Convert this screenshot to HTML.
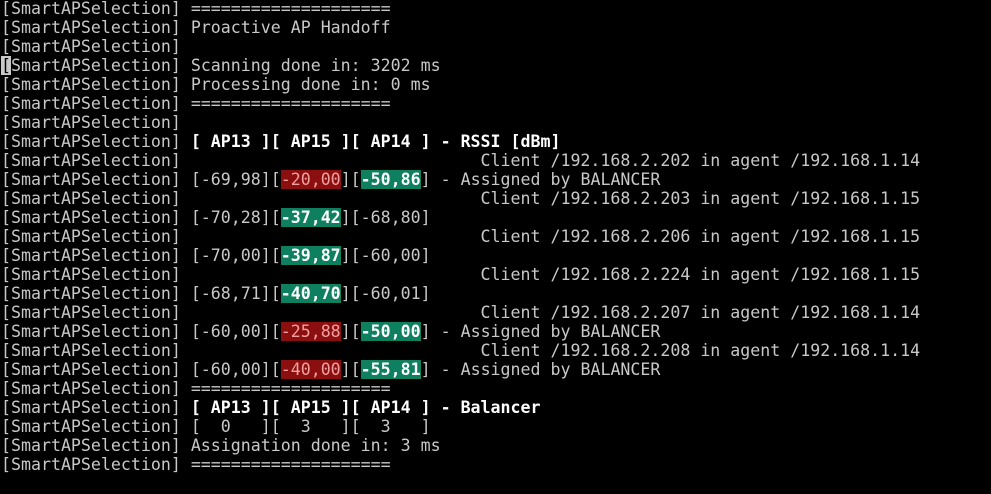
<!DOCTYPE html>
<html><head><meta charset="utf-8"><style>
html,body{margin:0;padding:0;background:#000;width:991px;height:494px;overflow:hidden}
pre{margin:0;padding:0 0 0 1px;position:relative;top:-1px;font-family:"DejaVu Sans Mono",monospace;font-size:16.6px;line-height:19px;color:#c8c8c8;white-space:pre}
b{color:#fff;font-weight:bold}
.r{background:#8c0f0f;color:#f0a0a0}
.g{background:#0e8060;color:#fff;font-weight:bold}
.c{background:#c8c8c8;color:#000}
</style></head><body><pre>[SmartAPSelection] ====================
[SmartAPSelection] Proactive AP Handoff
[SmartAPSelection]
<span class="c">[</span>SmartAPSelection] Scanning done in: 3202 ms
[SmartAPSelection] Processing done in: 0 ms
[SmartAPSelection] ====================
[SmartAPSelection]
[SmartAPSelection] <b>[ AP13 ][ AP15 ][ AP14 ] - RSSI [dBm]</b>
[SmartAPSelection]                              Client /192.168.2.202 in agent /192.168.1.14
[SmartAPSelection] [-69,98][<span class="r">-20,00</span>][<span class="g">-50,86</span>] - Assigned by BALANCER
[SmartAPSelection]                              Client /192.168.2.203 in agent /192.168.1.15
[SmartAPSelection] [-70,28][<span class="g">-37,42</span>][-68,80]
[SmartAPSelection]                              Client /192.168.2.206 in agent /192.168.1.15
[SmartAPSelection] [-70,00][<span class="g">-39,87</span>][-60,00]
[SmartAPSelection]                              Client /192.168.2.224 in agent /192.168.1.15
[SmartAPSelection] [-68,71][<span class="g">-40,70</span>][-60,01]
[SmartAPSelection]                              Client /192.168.2.207 in agent /192.168.1.14
[SmartAPSelection] [-60,00][<span class="r">-25,88</span>][<span class="g">-50,00</span>] - Assigned by BALANCER
[SmartAPSelection]                              Client /192.168.2.208 in agent /192.168.1.14
[SmartAPSelection] [-60,00][<span class="r">-40,00</span>][<span class="g">-55,81</span>] - Assigned by BALANCER
[SmartAPSelection] ====================
[SmartAPSelection] <b>[ AP13 ][ AP15 ][ AP14 ] - Balancer</b>
[SmartAPSelection] [  0   ][  3   ][  3   ]
[SmartAPSelection] Assignation done in: 3 ms
[SmartAPSelection] ====================
</pre></body></html>
